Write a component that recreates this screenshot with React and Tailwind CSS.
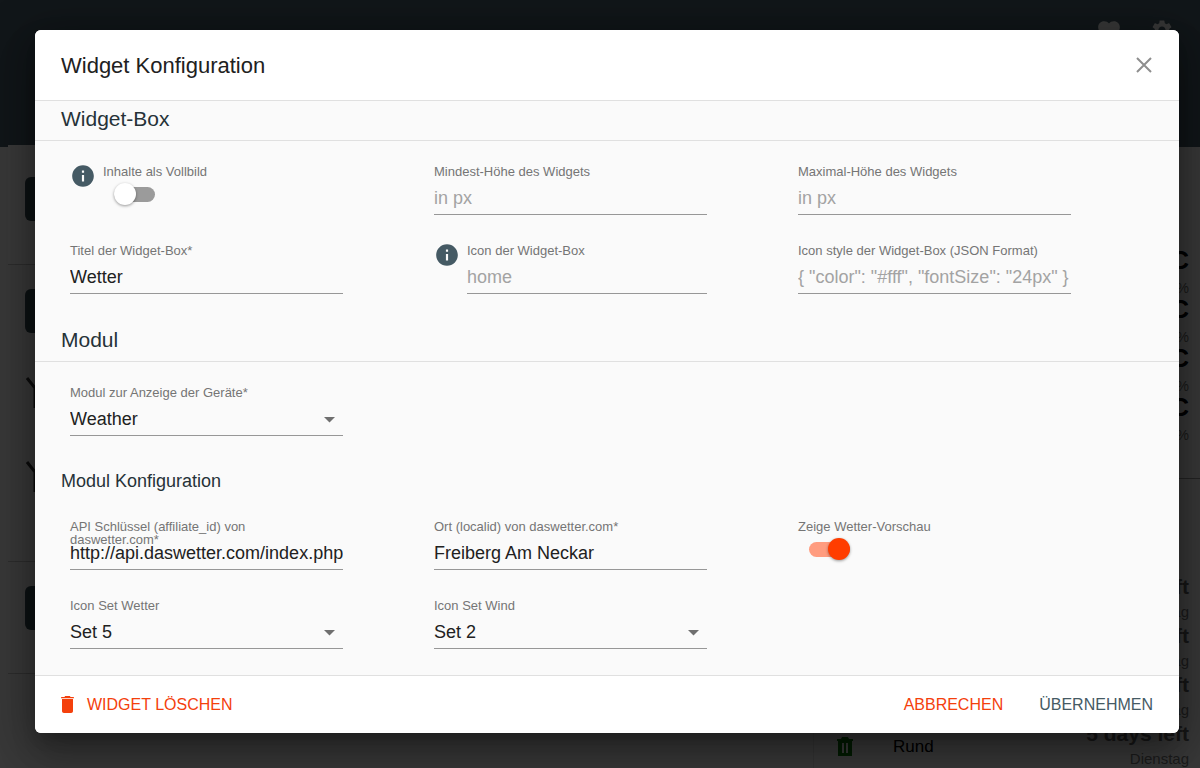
import { useState } from 'react';
import { MdInfo, MdSettings, MdFavorite } from 'react-icons/md';

const measurements = ['19 °C', '18 °C', '21 °C', '20 °C'];
const pickups = [
  { left: '2 days left', day: 'Samstag' },
  { left: '3 days left', day: 'Sonntag' },
  { left: '4 days left', day: 'Montag' },
  { left: '5 days left', day: 'Dienstag' },
];

function TrashIcon({ className }) {
  return (
    <svg viewBox="0 0 13 17" className={className} fill="currentColor" aria-hidden="true">
      <path d="M4.2 0h4.6l.8.9H12.2c.5 0 .8.3.8.7v.6H0v-.6c0-.4.3-.7.8-.7H3.400z" />
      <path d="M1 2.900h11V15c0 1.100-.8 2-1.900 2H2.900C1.800 17 1 16.100 1 15z" />
    </svg>
  );
}

function BinIcon() {
  return (
    <svg viewBox="0 0 18 20" className="ml-[22px] h-5 w-[18px] shrink-0 fill-[#067006]" aria-hidden="true">
      <path d="M1 2h4l1-2h6l1 2h4v2H1z" />
      <path fillRule="evenodd" d="M2 3h14v16H2zM6 6v10h2V6zM10 6v10h2V6z" />
    </svg>
  );
}

function InfoButton() {
  return (
    <button type="button" aria-label="Info" className="-mt-0.5 mr-[7px] shrink-0 self-start text-[#455a64]">
      <MdInfo size={26} />
    </button>
  );
}

function Field({ id, label, info, children }) {
  return (
    <div className="-mr-[9px] box-content flex w-3/4 pl-[9px]">
      {info && <InfoButton />}
      <div className="min-w-0 flex-1">
        <label htmlFor={id} className="block h-[13px] pr-5 text-[13px] leading-[13px] text-[#757575]">
          {label}
        </label>
        {children}
      </div>
    </div>
  );
}

function TextField({ id, label, info, placeholder, value }) {
  return (
    <Field id={id} label={label} info={info}>
      <input
        id={id}
        type="text"
        placeholder={placeholder}
        defaultValue={value}
        className="h-[37px] w-full border-b border-[#979797] bg-transparent pt-1 text-[18px] text-[#212121] outline-none placeholder:text-[#a3a3a3]"
      />
    </Field>
  );
}

function SelectField({ id, label, options, value }) {
  return (
    <Field id={id} label={label}>
      <div className="relative">
        <select
          id={id}
          defaultValue={value}
          className="h-[37px] w-full appearance-none border-b border-[#979797] bg-transparent pt-1 text-[18px] text-[#212121] outline-none"
        >
          {options.map((o) => (
            <option key={o}>{o}</option>
          ))}
        </select>
        <svg
          viewBox="0 0 11 6"
          className="pointer-events-none absolute top-[18px] right-2 h-[6px] w-[11px] fill-[#6f6f6f]"
        >
          <path d="M0 0h11L5.500 5.500z" />
        </svg>
      </div>
    </Field>
  );
}

function SwitchField({ id, label, info, checked }) {
  const [on, setOn] = useState(checked);
  return (
    <Field id={id} label={label} info={info}>
      <div className="relative mt-[5px] ml-[11px] flex h-[22px] w-[41px] items-center">
        <input
          id={id}
          type="checkbox"
          role="switch"
          checked={on}
          onChange={(e) => setOn(e.target.checked)}
          className="peer h-[15px] w-full appearance-none rounded-full bg-[#9b9b9b] checked:bg-[#ff9c7f]"
        />
        <span className="pointer-events-none absolute left-0 size-[22px] rounded-full bg-white shadow-[0_1px_3px_rgba(0,0,0,0.4)] peer-checked:right-0 peer-checked:left-auto peer-checked:bg-[#ff3d00]" />
      </div>
    </Field>
  );
}

function SectionTitle({ children }) {
  return (
    <h2 className="flex h-10 items-center border-b border-[#e0e0e0] px-[26px] pb-1 text-[21px] text-[#263238]">
      {children}
    </h2>
  );
}

function FieldGrid({ children }) {
  return <div className="grid grid-cols-3 gap-y-[29px] px-[26px]">{children}</div>;
}

function LeftCard({ className, children }) {
  return (
    <div className={`border-b border-[#b5b5b5] pl-[17px] ${className}`}>
      <div className="h-11 w-40 rounded-md bg-[#37474f]" />
      {children}
    </div>
  );
}

function Dashboard() {
  return (
    <div className="absolute inset-0 flex flex-col bg-[#e4e4e4]" aria-hidden="true">
      <header className="flex h-[147px] shrink-0 items-start justify-end gap-7 bg-[#455a64] px-[26px] pt-[18px] text-[#e0e0e0]">
        <MdFavorite size={26} />
        <MdSettings size={24} />
      </header>
      <div className="-mt-0.5 flex min-h-0 flex-1 gap-2 pl-2">
        <div className="flex flex-1 flex-col gap-[3px]">
          <LeftCard className="h-[120px] bg-[#e8e8e8] pt-8" />
          <LeftCard className="h-[294px] pt-[21px]">
            <div className="flex flex-col gap-[52px] pt-11">
              <svg viewBox="0 0 32 32" className="size-8 fill-none stroke-[#303030] stroke-3">
                <path d="M2 1l8 10v20" />
              </svg>
              <svg viewBox="0 0 32 32" className="size-8 fill-none stroke-[#303030] stroke-3">
                <path d="M2 1l8 10v20" />
              </svg>
            </div>
          </LeftCard>
          <LeftCard className="h-[109px] pt-[21px]" />
        </div>
        <div className="flex w-[387px] flex-col border-l border-[#d0d0d0] text-right">
          <div className="h-[334px] shrink-0 border-b border-[#909090] pt-[99px] pr-[11px]">
            {measurements.map((m) => (
              <div key={m} className="h-[49px]">
                <p className="text-[26px] leading-8 font-bold text-black">{m}</p>
                <p className="pt-1 text-[14px] leading-4 text-[#707070]">55 %</p>
              </div>
            ))}
          </div>
          <div className="pt-[96px] pr-[11px]">
            {pickups.map((p) => (
              <div key={p.day} className="flex h-[49px] items-center">
                <BinIcon />
                <p className="ml-[39px] text-[17px] text-black">Rund</p>
                <div className="ml-auto">
                  <p className="text-[21px] leading-6 font-bold text-[#606060]">{p.left}</p>
                  <p className="text-[15px] leading-[25px] text-[#707070]">{p.day}</p>
                </div>
              </div>
            ))}
          </div>
        </div>
      </div>
    </div>
  );
}

export default function App() {
  return (
    <div className="relative h-screen overflow-hidden font-['Liberation_Sans',Arial,sans-serif]">
      <Dashboard />
      <div className="absolute inset-0 bg-black/75 pt-[30px] pr-[21px] pl-[35px]">
        <form
          role="dialog"
          aria-labelledby="dialog-title"
          className="overflow-hidden rounded-md bg-[#fafafa] shadow-[0_11px_15px_-7px_rgba(0,0,0,0.2),0_24px_38px_3px_rgba(0,0,0,0.14),0_9px_46px_8px_rgba(0,0,0,0.3)]"
        >
          <header className="flex h-[71px] items-center justify-between border-b border-[#e0e0e0] bg-white px-[26px]">
            <h1 id="dialog-title" className="text-[22px] text-[#212121]">
              Widget Konfiguration
            </h1>
            <button type="button" aria-label="Schließen" className="text-[#8e8e8e]">
              <svg viewBox="0 0 18 18" className="size-[18px] fill-none stroke-current stroke-2">
                <path d="M2 2l14 14M16 2L2 16" />
              </svg>
            </button>
          </header>

          <SectionTitle>Widget-Box</SectionTitle>
          <div className="pt-6 pb-7">
            <FieldGrid>
              <SwitchField id="fullscreen" label="Inhalte als Vollbild" info checked={false} />
              <TextField id="min-height" label="Mindest-Höhe des Widgets" placeholder="in px" />
              <TextField id="max-height" label="Maximal-Höhe des Widgets" placeholder="in px" />
              <TextField id="title" label="Titel der Widget-Box*" value="Wetter" />
              <TextField id="icon" label="Icon der Widget-Box" info placeholder="home" />
              <TextField
                id="icon-style"
                label="Icon style der Widget-Box (JSON Format)"
                placeholder={'{ "color": "#fff", "fontSize": "24px" }'}
              />
            </FieldGrid>
          </div>

          <SectionTitle>Modul</SectionTitle>
          <div className="pt-6 pb-[26px]">
            <FieldGrid>
              <SelectField
                id="module"
                label="Modul zur Anzeige der Geräte*"
                options={['Weather', 'Calendar', 'Chart']}
                value="Weather"
              />
            </FieldGrid>
            <h3 className="pt-[33px] pb-[26px] pl-[26px] text-[18px] leading-[25px] text-[#263238]">
              Modul Konfiguration
            </h3>
            <FieldGrid>
              <TextField
                id="api-key"
                label="API Schlüssel (affiliate_id) von daswetter.com*"
                value="http://api.daswetter.com/index.php?api_lang=de"
              />
              <TextField id="location" label="Ort (localid) von daswetter.com*" value="Freiberg Am Neckar" />
              <SwitchField id="forecast" label="Zeige Wetter-Vorschau" checked={true} />
              <SelectField id="icons-weather" label="Icon Set Wetter" options={['Set 1', 'Set 5']} value="Set 5" />
              <SelectField id="icons-wind" label="Icon Set Wind" options={['Set 1', 'Set 2']} value="Set 2" />
            </FieldGrid>
          </div>

          <footer className="flex h-[58px] items-center border-t border-[#e0e0e0] bg-white px-[26px] text-[16px]">
            <button type="button" className="mr-auto flex items-center gap-[13px] text-[#f4400c]">
              <TrashIcon className="h-[17px] w-[13px]" />
              WIDGET LÖSCHEN
            </button>
            <button type="button" className="mr-9 text-[#f4400c]">
              ABBRECHEN
            </button>
            <button type="submit" className="text-[#455a64]">
              ÜBERNEHMEN
            </button>
          </footer>
        </form>
      </div>
    </div>
  );
}
